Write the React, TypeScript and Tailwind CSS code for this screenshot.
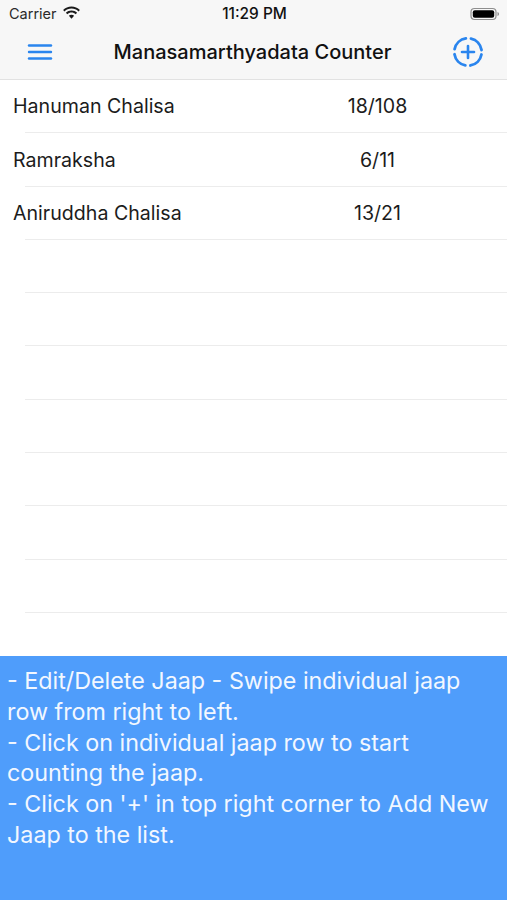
const jaaps = [
  { name: "Hanuman Chalisa", count: "18/108" },
  { name: "Ramraksha", count: "6/11" },
  { name: "Aniruddha Chalisa", count: "13/21" },
  { name: "", count: "" },
  { name: "", count: "" },
  { name: "", count: "" },
  { name: "", count: "" },
  { name: "", count: "" },
  { name: "", count: "" },
  { name: "", count: "" },
];

function WifiIcon() {
  return (
    <svg className="mb-[2px]" width="19" height="14" viewBox="0 0 19 14" fill="#1a1a1a">
      <path d="M9.5 2.6c2.7 0 5.1 1 7 2.8l1.4-1.500C15.700 1.700 12.700.4 9.500.4S3.300 1.700 1.100 3.900l1.400 1.500c1.900-1.800 4.300-2.800 7-2.800z" />
      <path d="M9.500 6.500c1.600 0 3 .6 4.200 1.700l1.400-1.500c-1.500-1.400-3.500-2.300-5.600-2.300s-4.100.9-5.600 2.300l1.400 1.500c1.200-1.100 2.600-1.700 4.200-1.700z" />
      <path d="M9.500 8.800c-1 0-1.900.4-2.600 1l2.600 2.900 2.600-2.900c-.7-.6-1.600-1-2.600-1z" />
    </svg>
  );
}

function BatteryIcon() {
  return (
    <svg width="30" height="14" viewBox="0 0 30 14">
      <rect x="1" y="1.500" width="25" height="11" rx="3.500" fill="none" stroke="#8e8e8e" strokeWidth="1.200" />
      <rect x="2.800" y="3.200" width="21.400" height="7.600" rx="2" fill="#000000" />
      <path d="M27.500 5v4c.9-.3 1.500-1.100 1.500-2s-.6-1.700-1.500-2z" fill="#8e8e8e" />
    </svg>
  );
}

function MenuIcon() {
  return (
    <svg width="26" height="18" viewBox="0 0 26 18" stroke="#2a85ee" strokeWidth="2.400" strokeLinecap="round">
      <line x1="2" y1="2.500" x2="24" y2="2.500" />
      <line x1="2" y1="9" x2="24" y2="9" />
      <line x1="2" y1="15.500" x2="24" y2="15.500" />
    </svg>
  );
}

function AddIcon() {
  return (
    <svg width="32" height="32" viewBox="0 0 32 32" fill="none" stroke="#2a85ee" strokeLinecap="round">
      <circle cx="16" cy="16" r="13.700" strokeWidth="2.800" strokeDasharray="16.300 5.220" strokeDashoffset="-2.610" />
      <line x1="16" y1="10" x2="16" y2="22" strokeWidth="2.600" />
      <line x1="10" y1="16" x2="22" y2="16" strokeWidth="2.600" />
    </svg>
  );
}

export default function App() {
  return (
    <div className="flex h-[900px] w-[507px] flex-col overflow-hidden bg-white font-['Inter',sans-serif]">
      <div className="h-[80px] shrink-0 border-b border-[#e2e2e2] bg-[#f7f7f7]">
        <div className="flex h-[27px] items-center justify-between pl-[9px] pr-[7px]">
          <div className="flex w-[120px] items-center gap-[5px]">
            <span className="text-[14.500px] text-[#2a2a2a]">Carrier</span>
            <WifiIcon />
          </div>
          <span className="text-[15.400px] font-medium text-[#111111]">11:29 PM</span>
          <div className="flex w-[120px] justify-end">
            <BatteryIcon />
          </div>
        </div>
        <div className="flex h-[50px] items-center justify-between pl-[27px] pr-[23px]">
          <MenuIcon />
          <span className="text-[20px] font-medium text-[#111111]">Manasamarthyadata Counter</span>
          <AddIcon />
        </div>
      </div>

      <div className="flex-1">
        {jaaps.map((jaap, i) => (
          <div key={i} className="h-[53.3px]">
            <div className="flex h-[52.3px] items-center pl-[13px] pt-[2px] text-[19.600px] text-[#1c1c1c]">
              <span className="w-[300px]">{jaap.name}</span>
              <span className="w-[129px] text-center">{jaap.count}</span>
            </div>
            <div className="ml-[25px] h-px bg-[#ececec]" />
          </div>
        ))}
      </div>

      <div className="h-[244px] shrink-0 bg-[#4f9dfb] px-[7px] pt-[10px] text-[23.300px] leading-[30.800px] text-[#f2f7ff]">
        <p>- Edit/Delete Jaap - Swipe individual jaap row from right to left.</p>
        <p>- Click on individual jaap row to start counting the jaap.</p>
        <p>- Click on '+' in top right corner to Add New Jaap to the list.</p>
      </div>
    </div>
  );
}
